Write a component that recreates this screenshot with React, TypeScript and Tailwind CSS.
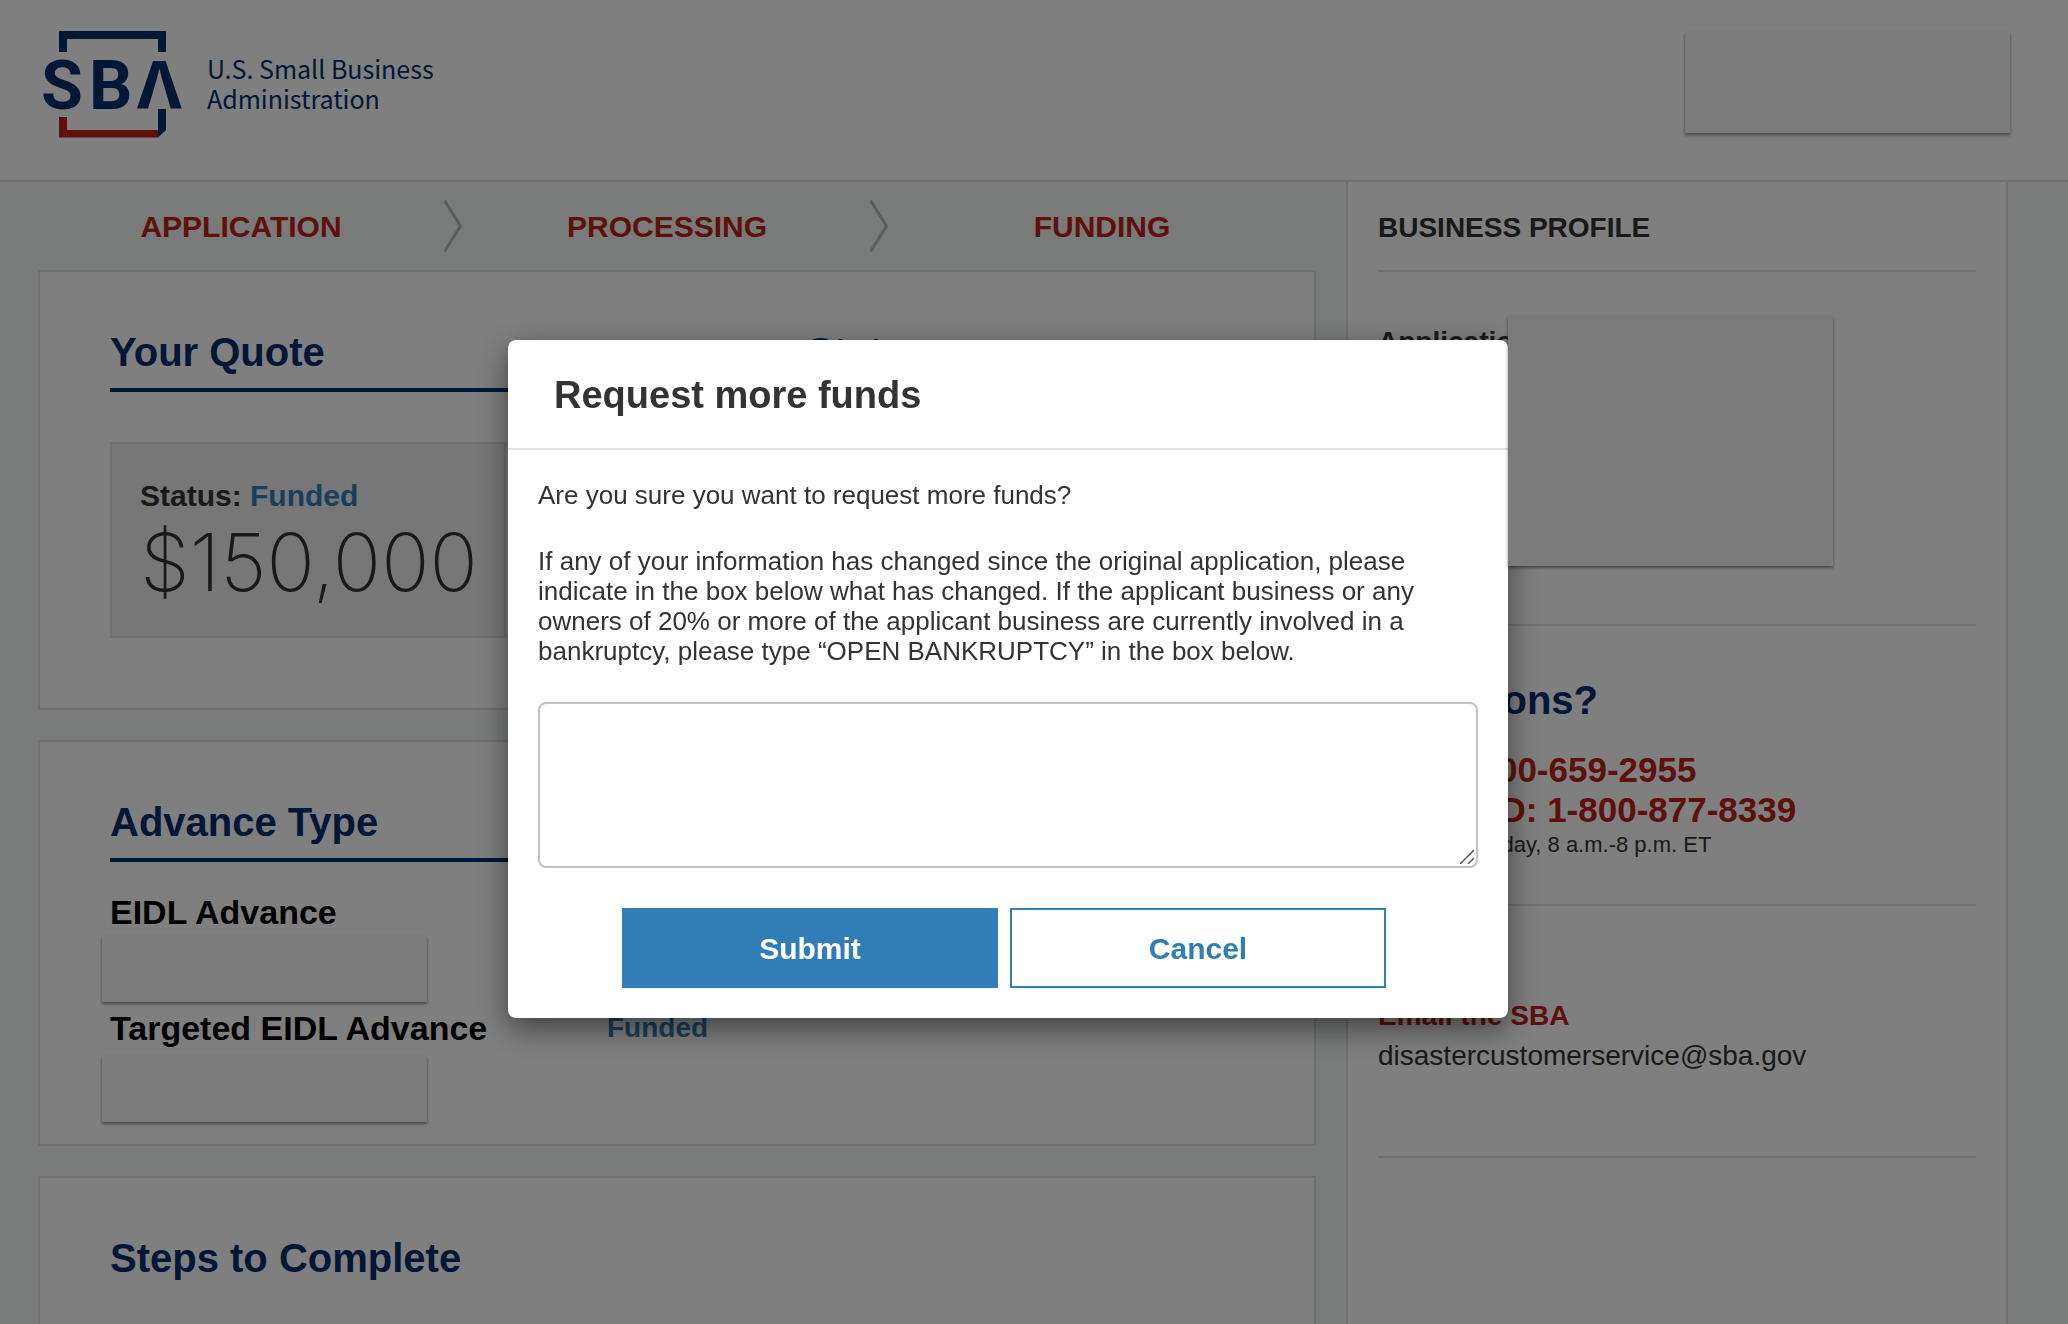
import { useState } from "react";
import type { ReactNode } from "react";

const steps = [
  { name: "APPLICATION", current: false },
  { name: "PROCESSING", current: false },
  { name: "FUNDING", current: true },
];

const SbaLogo = () => (
  <svg className="w-[150px] h-[108px] shrink-0" viewBox="-6 0 150 108" role="img" aria-label="SBA">
    <path d="M15 22V1H122V22H114V9H23V22Z" fill="#002e6d" />
    <path d="M15 87H23V100H114V107.5H15Z" fill="#bd2318" />
    <path d="M114 79H122V100L114 107.5Z" fill="#002e6d" />
    <g fill="#002e6d" fontFamily="Roboto, sans-serif" fontWeight="700" fontSize="68">
      <text x="-3" y="79">S</text>
      <text x="45" y="79">B</text>
      <text x="93" y="79" fontFamily="'Noto Sans', sans-serif" fontSize="67">Λ</text>
    </g>
  </svg>
);

const StepChevron = () => (
  <svg className="w-[18px] h-[52px] shrink-0" viewBox="0 0 18 52" fill="none" aria-hidden="true">
    <path d="M0.5 0.5L16.5 26L0.5 51.5" stroke="#b9bbba" strokeWidth="3" />
  </svg>
);

// Covers private account details, stays above the backdrop
const Redacted = ({ className }: { className: string }) => (
  <div className={`relative z-20 w-[325px] shrink-0 bg-[#7a7a7a] shadow-[0_2px_3px_rgba(0,0,0,0.45)] ${className}`} />
);

const CardHeading = ({ children }: { children: ReactNode }) => (
  <h2 className="pb-4 border-b-4 border-[#002e6d] text-[40px] leading-10 font-bold text-[#002e6d]">{children}</h2>
);

const Header = () => (
  <header className="flex items-start justify-between h-[182px] shrink-0 border-b-2 border-[#dfdfdf] bg-white pl-[38px] pr-[58px] pt-[30px]">
    <a href="#" className="flex items-start gap-[19px]">
      <SbaLogo />
      <span className="pt-[23px] text-[25px] leading-[30px] text-[#002e6d] font-['Noto_Sans_CJK_SC','Noto_Sans',sans-serif]">
        <span className="block">U.S. Small Business</span>
        <span className="block">Administration</span>
      </span>
    </a>
    <Redacted className="mt-0.5 h-[101px]" />
  </header>
);

const Progress = () => (
  <ol className="flex h-[88px] items-center">
    {steps.map((step) => (
      <li key={step.name} className="flex flex-1 items-center pr-0.5">
        <span className="flex-1 pt-0.5 text-center text-[30px] leading-10 font-bold text-[#bd2318]">{step.name}</span>
        {!step.current && <StepChevron />}
      </li>
    ))}
  </ol>
);

const Sidebar = () => (
  <aside className="w-[662px] shrink-0 border-x-2 border-[#dfdfdf] bg-white px-[30px] pt-[30px] text-[#333]">
    <h2 className="pb-[26px] border-b-2 border-[#dfdfdf] text-[28px] leading-8 font-bold">BUSINESS PROFILE</h2>
    <section className="flex border-b-2 border-[#dfdfdf] pt-11 pb-[58px]">
      <div className="w-[130px] pt-2.5 text-[28px] leading-8 font-bold whitespace-nowrap">Application #</div>
      <Redacted className="h-[250px]" />
    </section>
    <section className="border-b-2 border-[#dfdfdf] pt-[54px] pb-11">
      <h2 className="mb-[30px] text-[40px] leading-10 font-bold text-[#002e6d]">Questions?</h2>
      <p className="text-[35px] leading-10 font-bold text-[#bd2318]">
        Tel: 1-800-659-2955
        <br />
        TTY/TDD: 1-800-877-8339
      </p>
      <p className="text-[22px] leading-[30px]">Monday - Friday, 8 a.m.-8 p.m. ET</p>
    </section>
    <section className="border-b-2 border-[#dfdfdf] pt-[90px] pb-20 text-[28px] leading-10">
      <h3 className="font-bold text-[#bd2318]">Email the SBA</h3>
      <a href="mailto:disastercustomerservice@sba.gov">disastercustomerservice@sba.gov</a>
    </section>
  </aside>
);

const RequestFundsModal = ({ onClose }: { onClose: () => void }) => {
  const [changes, setChanges] = useState("");

  return (
    <div className="fixed inset-0 z-10 flex items-start justify-center bg-black/50 pt-[340px] pr-[52px]">
      <div
        role="dialog"
        aria-modal="true"
        aria-labelledby="modal-title"
        className="w-[1000px] rounded-lg bg-white text-[#333] shadow-[0_10px_30px_rgba(0,0,0,0.5)]"
      >
        <div className="border-b-2 border-[#dfdfdf] px-[46px] pt-[35px] pb-[33px]">
          <h2 id="modal-title" className="text-[38px] leading-10 font-bold">Request more funds</h2>
        </div>
        <form className="p-[30px] text-[26px] leading-[30px]" onSubmit={(e) => e.preventDefault()}>
          <p>Are you sure you want to request more funds?</p>
          <label htmlFor="changes" className="mt-9 block">
            If any of your information has changed since the original application, please indicate in the box below
            what has changed. If the applicant business or any owners of 20% or more of the applicant business are
            currently involved in a bankruptcy, please type “OPEN BANKRUPTCY” in the box below.
          </label>
          <div className="relative mt-9">
            <textarea
              id="changes"
              value={changes}
              onChange={(e) => setChanges(e.target.value)}
              className="block h-[166px] w-full resize-none rounded-lg border-2 border-[#c2c2c2] bg-white px-4 py-3 outline-none"
            />
            <svg className="absolute right-1 bottom-1 size-3.5" viewBox="0 0 14 14" aria-hidden="true">
              <path d="M0 14L14 0M8 14L14 8" stroke="#555" strokeWidth="1.5" />
            </svg>
          </div>
          <div className="mt-10 flex justify-center gap-3 pr-2">
            <button type="submit" className="h-20 w-[376px] bg-[#317db7] pt-0.5 text-[30px] font-bold text-white">
              Submit
            </button>
            <button
              type="button"
              onClick={onClose}
              className="h-20 w-[376px] border-2 border-[#317db7] bg-white pt-0.5 text-[30px] font-bold text-[#317db7]"
            >
              Cancel
            </button>
          </div>
        </form>
      </div>
    </div>
  );
};

const App = () => {
  const [open, setOpen] = useState(true);

  return (
    <div className="flex h-screen flex-col overflow-hidden bg-[#f2f6f4] font-['Liberation_Sans',Arial,sans-serif]">
      <Header />
      <div className="flex flex-1 gap-[30px] pl-[38px] pr-[60px]">
        <main className="flex flex-1 flex-col">
          <Progress />

          {/* Quote */}
          <section className="grid grid-cols-2 gap-[260px] border-2 border-[#dfdfdf] bg-white px-[70px] pt-[60px] pb-[70px]">
            <div>
              <CardHeading>Your Quote</CardHeading>
              <div className="mt-[50px] w-[396px] border-2 border-[#dfdfdf] bg-[#eee] px-7 pt-[34px] pb-[26px] text-[#333]">
                <p className="text-[30px] leading-9 font-bold">
                  Status: <span className="text-[#317db7]">Funded</span>
                </p>
                <p className="text-[80px] leading-[96px] font-extralight font-['Inter',sans-serif]">$150,000</p>
              </div>
            </div>
            <div>
              <CardHeading>Status</CardHeading>
            </div>
          </section>

          {/* Advances */}
          <section className="mt-[30px] border-2 border-[#dfdfdf] bg-white px-[70px] pt-[60px] pb-[22px]">
            <CardHeading>Advance Type</CardHeading>
            <h3 className="mt-[30px] text-[34px] leading-10 font-bold">EIDL Advance</h3>
            <Redacted className="mt-1 -ml-2 h-[66px]" />
            <div className="mt-1.5 flex">
              <h3 className="w-[497px] text-[34px] leading-10 font-bold">Targeted EIDL Advance</h3>
              <p className="text-[28px] leading-10 font-bold text-[#317db7]">Funded</p>
            </div>
            <Redacted className="mt-2 -ml-2 h-[66px]" />
          </section>

          {/* Steps */}
          <section className="mt-[30px] flex-1 border-2 border-b-0 border-[#dfdfdf] bg-white px-[70px] pt-[60px]">
            <h2 className="text-[40px] leading-10 font-bold text-[#002e6d]">Steps to Complete</h2>
          </section>
        </main>
        <Sidebar />
      </div>
      {open && <RequestFundsModal onClose={() => setOpen(false)} />}
    </div>
  );
};

export default App;
